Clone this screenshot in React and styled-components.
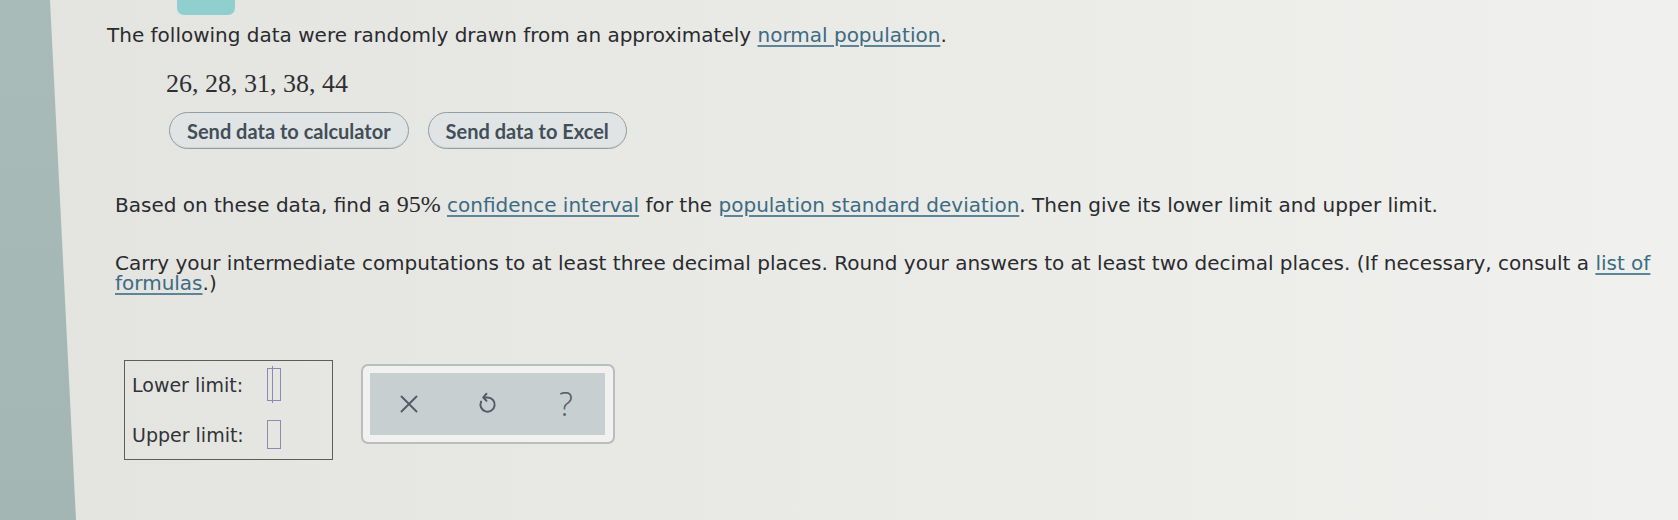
import { createGlobalStyle } from "styled-components";
import styled from "styled-components";

const GlobalStyle = createGlobalStyle`
    html, body {
        margin: 0;
        padding: 0;
    }
    body {
        font-family: "DejaVu Sans", Verdana, sans-serif;
        color: #2a2b2e;
    }
`;

const Page = styled.div`
    display: flex;
    height: 520px;
    width: 1678px;
    overflow: hidden;
    background: linear-gradient(90deg, #e3e3e0 0%, #e9e9e6 45%, #f0f0ee 100%);
`;

// the teal edge of the window, a bit slanted in the photo
const SideStrip = styled.div`
    flex: 0 0 76px;
    background: linear-gradient(180deg, #a9bbb8 0%, #a3b6b3 100%);
    clip-path: polygon(0 0, 50px 0, 76px 100%, 0 100%);
`;

const Main = styled.div`
    flex: 1;
    display: flex;
    flex-direction: column;
    padding-left: 31px;
`;

const TopTab = styled.div`
    width: 58px;
    height: 15px;
    margin-left: 70px;
    background: #8fd0cf;
    border-radius: 0 0 7px 7px;
`;

const Sentence = styled.p`
    margin: 6px 0 0;
    font-size: 20px;
    line-height: 29px;
`;

const Link = styled.span`
    color: #3c6b84;
    text-decoration: underline;
    text-decoration-color: #5d8497;
    text-underline-offset: 3px;
`;

const DataValues = styled.div`
    margin: 19px 0 0 59px;
    font-family: "Liberation Serif", "Times New Roman", serif;
    font-size: 26px;
    line-height: 30px;
    color: #2f2f33;
`;

const ButtonRow = styled.div`
    display: flex;
    gap: 19px;
    margin: 13px 0 0 62px;
`;

const PillButton = styled.button`
    height: 37px;
    padding: 0 17px;
    border: 1.5px solid #949ea2;
    border-radius: 19px;
    background: #e1e4e4;
    font-family: Lato, "Open Sans", sans-serif;
    font-weight: 700;
    font-size: 20px;
    color: #424f58;
    box-shadow: inset 0 -1px 0 #cfd4d5;
`;

const Question = styled.div`
    margin: 45px 0 0 8px;
    display: flex;
    flex-direction: column;
    gap: 37px;
`;

const Para = styled.p`
    margin: 0;
    font-size: 20px;
    line-height: 20.5px;
`;

const Percent = styled.span`
    font-family: "Liberation Serif", "Times New Roman", serif;
    font-size: 24px;
`;

const AnswerRow = styled.div`
    display: flex;
    align-items: flex-start;
    gap: 28px;
    margin: 66px 0 0 17px;
`;

const AnswerBox = styled.div`
    width: 209px;
    box-sizing: border-box;
    border: 1.5px solid #5d5d60;
    padding: 8px 7px;
    display: grid;
    grid-template-columns: 135px 1fr;
    grid-auto-rows: 32px;
    row-gap: 18px;
    align-items: center;
`;

const Label = styled.span`
    font-size: 19px;
    color: #323337;
`;

const Blank = styled.span`
    position: relative;
    width: 14px;
    height: ${(p) => (p.$active ? 33 : 29)}px;
    box-sizing: border-box;
    border: 1.5px solid #8a8ab4;
    ${(p) =>
        p.$active &&
        `
        &::after {
            content: "";
            position: absolute;
            left: 4px;
            top: -3px;
            bottom: -3px;
            border-left: 1.5px solid #8a8ab4;
        }
    `}
`;

const Toolbar = styled.div`
    margin-top: 4px;
    width: 254px;
    height: 80px;
    box-sizing: border-box;
    padding: 7px 8px 7px 7px;
    border: 2px solid #b9bdbf;
    border-radius: 7px;
    background: #f1f1f0;
`;

const ToolPanel = styled.div`
    height: 100%;
    display: grid;
    grid-template-columns: repeat(3, 1fr);
    align-items: center;
    justify-items: center;
    background: #c8cfd1;
`;

const ToolIcon = styled.span`
    display: flex;
    align-items: center;
    justify-content: center;
    color: #515d66;
    font-family: "Open Sans", sans-serif;
    font-weight: 300;
    font-size: 33px;
    line-height: 1;
`;

function CloseIcon() {
    return (
        <svg width="20" height="20" viewBox="0 0 20 20" fill="none">
            <path
                d="M2.5 2.5 L17.5 17.5 M17.5 2.5 L2.5 17.5"
                stroke="currentColor"
                strokeWidth="1.9"
                strokeLinecap="round"
            />
        </svg>
    );
}

function UndoIcon() {
    return (
        <svg width="22" height="24" viewBox="0 0 20 22" fill="none">
            <path
                d="M7 5 H10.5 A6.5 6.5 0 1 1 4.6 8.8"
                stroke="currentColor"
                strokeWidth="1.8"
                strokeLinecap="round"
            />
            <path
                d="M9.5 1.6 L6.6 5 L9.5 8"
                stroke="currentColor"
                strokeWidth="1.8"
                strokeLinecap="round"
                strokeLinejoin="round"
            />
        </svg>
    );
}

export default function App() {
    return (
        <>
            <GlobalStyle />
            <Page>
                <SideStrip />
                <Main>
                    <TopTab />
                    <Sentence>
                        The following data were randomly drawn from an
                        approximately <Link>normal population</Link>.
                    </Sentence>
                    <DataValues>26, 28, 31, 38, 44</DataValues>
                    <ButtonRow>
                        <PillButton>Send data to calculator</PillButton>
                        <PillButton>Send data to Excel</PillButton>
                    </ButtonRow>
                    <Question>
                        <Para>
                            Based on these data, find a <Percent>95%</Percent>{" "}
                            <Link>confidence interval</Link> for the{" "}
                            <Link>population standard deviation</Link>. Then
                            give its lower limit and upper limit.
                        </Para>
                        <Para>
                            Carry your intermediate computations to at least
                            three decimal places. Round your answers to at
                            least two decimal places. (If necessary, consult a{" "}
                            <Link>list of formulas</Link>.)
                        </Para>
                    </Question>
                    <AnswerRow>
                        <AnswerBox>
                            <Label>Lower limit:</Label>
                            <Blank $active />
                            <Label>Upper limit:</Label>
                            <Blank />
                        </AnswerBox>
                        <Toolbar>
                            <ToolPanel>
                                <ToolIcon>
                                    <CloseIcon />
                                </ToolIcon>
                                <ToolIcon>
                                    <UndoIcon />
                                </ToolIcon>
                                <ToolIcon>?</ToolIcon>
                            </ToolPanel>
                        </Toolbar>
                    </AnswerRow>
                </Main>
            </Page>
        </>
    );
}
